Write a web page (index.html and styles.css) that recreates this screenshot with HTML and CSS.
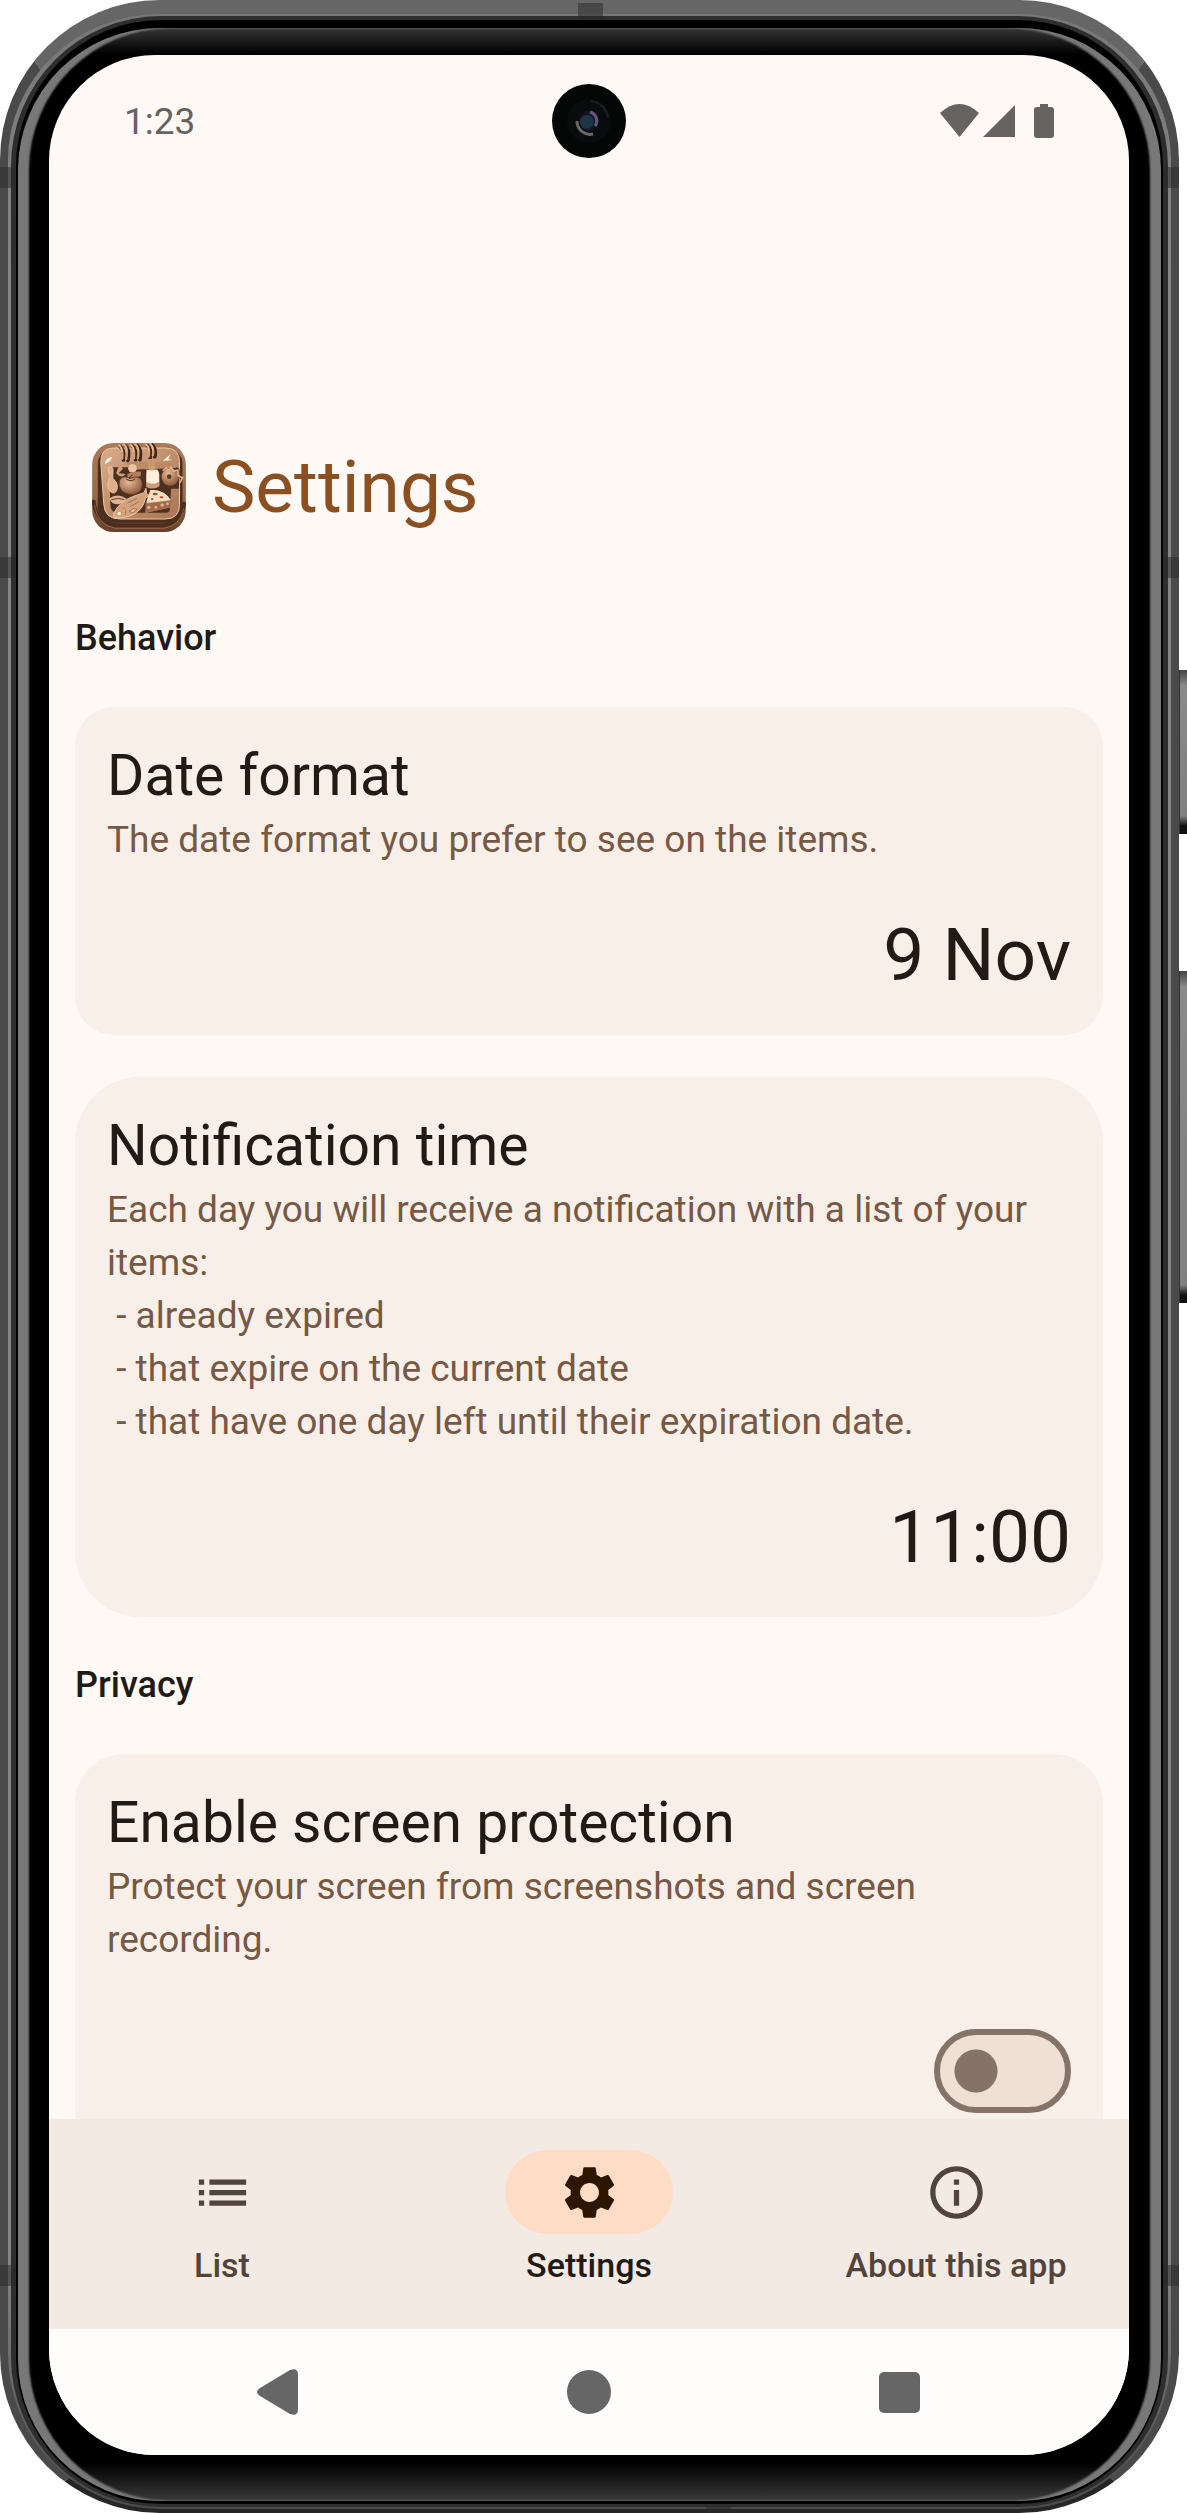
FILE: index.html
```html
<!DOCTYPE html>
<html lang="en">
<head>
  <meta charset="utf-8" />
  <meta name="viewport" content="width=device-width, initial-scale=1.0" />
  <title>Settings</title>
  <link rel="stylesheet" href="styles.css">
</head>
<body>
  <div class="device">
    <span class="side-key power"></span>
    <span class="side-key volume"></span>
    <div class="frame">
      <div class="rim">
        <div class="bezel">
          <div class="screen">

            <div class="status-bar">
              <span class="clock">1:23</span>
              <svg class="camera" viewBox="0 0 74 74" aria-hidden="true">
                <circle cx="37" cy="37" r="37" fill="#050606"/>
                <circle cx="37" cy="37" r="22" fill="#0a0b0d"/>
                <path d="M25 37a13 13 0 0 0 16 13" fill="none" stroke="#6a6866" stroke-width="3"/>
                <path d="M39 17a20 20 0 0 1 17 16" fill="none" stroke="#1d1f24" stroke-width="2"/>
                <circle cx="37" cy="37" r="10" fill="#14161f"/>
                <circle cx="35" cy="38" r="7" fill="#1c3547"/>
                <path d="M38 28a9 9 0 0 1 5 14" fill="none" stroke="#65587c" stroke-width="3"/>
              </svg>
              <svg class="status-icons" viewBox="0 0 114 34" aria-hidden="true">
                <path d="M0 9Q19.500-9 39 9L19.500 33Z"/>
                <path d="M43 33L75 1V33Z"/>
                <path d="M100 0h8v3h3a3 3 0 0 1 3 3v25a3 3 0 0 1-3 3H97a3 3 0 0 1-3-3V6a3 3 0 0 1 3-3h3z"/>
              </svg>
            </div>

            <main class="content">
              <header class="app-header">
                <svg class="app-icon" viewBox="97 69 281 267" aria-hidden="true">
                  <defs>
                    <linearGradient id="wood" x1="0" y1="0" x2="0" y2="1">
                      <stop offset="0" stop-color="#a97b5b"/>
                      <stop offset=".6" stop-color="#98694a"/>
                      <stop offset="1" stop-color="#65402a"/>
                    </linearGradient>
                    <linearGradient id="tray" x1="0" y1="0" x2="1" y2="1">
                      <stop offset="0" stop-color="#d9ab88"/>
                      <stop offset="1" stop-color="#a97552"/>
                    </linearGradient>
                    <radialGradient id="fruit" cx=".4" cy=".3" r=".7">
                      <stop offset="0" stop-color="#e8bc98"/>
                      <stop offset="1" stop-color="#8c5a3a"/>
                    </radialGradient>
                  </defs>
                  <rect x="97" y="69" width="281" height="267" rx="64" fill="url(#wood)"/>
                  <path d="M101 240q5 66 66 76h142q56-7 65-70" fill="none" stroke="#4b2d1c" stroke-width="11"/>
                  <path d="M104 255q8 60 62 70h146q50-8 60-60" fill="none" stroke="#a77753" stroke-width="2"/>
                  <rect x="114" y="84" width="254" height="224" rx="48" fill="#492f20"/>
                  <path d="M160 84h155q44 0 44 40v130q0 43-44 43H180q-45 0-48-43l-9-125q-2-45 37-45z" fill="url(#tray)" stroke="#efc7a5" stroke-width="3"/>
                  <path d="M147 142h200q14 0 13 14l-3 50h-23l-4 64q-2 8-12 8H172q-18 0-20-20z" fill="#4c3122"/>
                  <path d="M193 126h130q28-2 25 18l-130 5z" fill="#bd8a66"/>
                  <path d="M134 132q5-20 23-22-3 15-23 22zM309 122l23-19-7 15 14 2z" fill="#fff3e4"/>
                  <g fill="none" stroke-linecap="round">
                    <path d="M181 80q14 10 10 40M196 77q15 10 8 44M217 79q14 10 10 40M232 77q14 10 8 42M263 77q14 10 8 37M276 74q14 14 9 36" stroke="#3f2518" stroke-width="11"/>
                    <path d="M177 76q14 10 10 40M191 73q15 10 8 44M212 75q14 10 10 40M226 73q14 10 8 42M258 73q14 10 8 37M270 70q14 14 9 36" stroke="#cf9f7b" stroke-width="7"/>
                    <path d="M179 75q8 6 8 20M193 73q8 6 8 20M214 74q8 6 8 20M228 73q8 6 8 18M260 73q7 5 7 18M272 72q7 5 7 18" stroke="#fbe0c6" stroke-width="2"/>
                  </g>
                  <path d="M145 143q13-7 15 5l-1 27q15 12 14 27-2 19-15 17-14-6-14-26l5-23z" fill="#dcaf8c" stroke="#f5d2b2" stroke-width="2"/>
                  <path d="M174 145q10-13 15 2l-13 13 21 2q-12 16-28-2z" fill="#d2a17c"/>
                  <circle cx="218" cy="145" r="13" fill="#e9c4a4"/>
                  <path d="M202 163q16-10 42-8l-2 14-38 6z" fill="#b47f59"/>
                  <circle cx="275" cy="128" r="12" fill="#c9966f"/>
                  <path d="M266 138h21v12q12 5 12 15v34q-18 12-40 2v-38q1-9 8-13z" fill="#cf9c74"/>
                  <path d="M260 148q14 7 32 0 7 8 5 18v20q-18 10-37 0z" fill="#fff0de"/>
                  <path d="M179 181q7-15 27-8 9 5 17-2 22-3 24 18 2 32-31 35-32-1-38-28z" fill="url(#fruit)" stroke="#5a3824" stroke-width="2"/>
                  <path d="M207 178q5-12 11-12M199 177q15 11 27-1" fill="none" stroke="#4c2f20" stroke-width="3"/>
                  <circle cx="331" cy="171" r="26" fill="url(#fruit)"/>
                  <circle cx="328" cy="170" r="7" fill="#5d3924"/>
                  <path d="M308 152l12-8 4 8 10-10 7 12 13-4 1 17 13 6-8 16" fill="none" stroke="#dfb18d" stroke-width="5"/>
                  <path d="M148 236q24-19 52 0-20 26-43 12z" fill="#e0b28e"/>
                  <path d="M155 239q22-8 38 0" fill="none" stroke="#67422d" stroke-width="3"/>
                  <path d="M162 280q15-34 56-50l35-12 5-13 2 17 11 5-14 7q-5 31-34 48-31 16-61 10z" fill="#d3a17c" stroke="#f0c7a4" stroke-width="3"/>
                  <circle cx="178" cy="281" r="5" fill="#fff5e4"/>
                  <path d="M191 262q10 9 6 22M203 249l28-14M210 260l28-15M208 274l13-8 11 1-13 12z" fill="#e9be9a" stroke="#87583b" stroke-width="2"/>
                  <path d="M260 245l12-35q40-4 64 35l-2 17-77 16z" fill="#e0b28d"/>
                  <path d="M260 246l12-36q42-3 64 34z" fill="#fbdcbf"/>
                  <path d="M257 251l79-11-2 22-77 17z" fill="#a06c49"/>
                  <g fill="#8a5a3c">
                    <ellipse cx="286" cy="222" rx="8" ry="4"/>
                    <ellipse cx="305" cy="232" rx="6" ry="3"/>
                    <ellipse cx="277" cy="237" rx="4" ry="3"/>
                  </g>
                  <g fill="#e3b38b">
                    <circle cx="267" cy="262" r="5"/>
                    <circle cx="288" cy="262" r="4"/>
                    <circle cx="307" cy="255" r="5"/>
                    <circle cx="323" cy="251" r="4"/>
                  </g>
                </svg>
                <h1>Settings</h1>
              </header>

              <h2 class="section-title">Behavior</h2>
              <section class="card card-small">
                <h3>Date format</h3>
                <p>The date format you prefer to see on the items.</p>
                <button class="value" type="button">9 Nov</button>
              </section>
              <section class="card card-large">
                <h3>Notification time</h3>
                <p>Each day you will receive a notification with a list of your items:
 - already expired
 - that expire on the current date
 - that have one day left until their expiration date.</p>
                <button class="value" type="button">11:00</button>
              </section>

              <h2 class="section-title">Privacy</h2>
              <section class="card">
                <h3><label for="screen-protection">Enable screen protection</label></h3>
                <p>Protect your screen from screenshots and screen recording.</p>
                <input class="switch" type="checkbox" role="switch" id="screen-protection">
              </section>
            </main>

            <nav class="tabs">
              <a class="tab" href="#list">
                <span class="pill"><svg viewBox="0 0 24 24" aria-hidden="true"><path d="M3 9h2V7H3zm0 4h2v-2H3zm0 4h2v-2H3zM7 7v2h14V7zm0 6h14v-2H7zm0 4h14v-2H7z"/></svg></span>
                List
              </a>
              <a class="tab active" href="#settings">
                <span class="pill"><svg viewBox="0 0 24 24" aria-hidden="true"><path d="M19.140 12.940c.04-.3.060-.61.060-.94 0-.32-.02-.64-.07-.94l2.030-1.580c.18-.14.230-.41.120-.61l-1.920-3.320c-.12-.22-.37-.29-.59-.22l-2.390.96c-.5-.38-1.030-.7-1.620-.94l-.36-2.540c-.04-.24-.24-.41-.48-.41h-3.840c-.24 0-.43.170-.47.410l-.36 2.540c-.59.240-1.130.570-1.620.940l-2.390-.96c-.22-.08-.47 0-.59.220L2.740 8.870c-.12.210-.08.470.120.610l2.030 1.580c-.05.3-.09.630-.09.940s.02.640.070.940l-2.030 1.580c-.18.140-.23.410-.12.610l1.920 3.320c.12.220.370.290.590.220l2.390-.96c.5.380 1.030.7 1.620.940l.36 2.540c.05.240.240.410.480.410h3.840c.24 0 .44-.17.470-.41l.36-2.540c.59-.24 1.130-.56 1.620-.94l2.390.96c.22.080.470 0 .59-.22l1.920-3.320c.12-.22.070-.47-.12-.61zM12 15.600c-1.980 0-3.600-1.620-3.600-3.600s1.620-3.600 3.600-3.600 3.600 1.620 3.600 3.600-1.620 3.600-3.600 3.600z"/></svg></span>
                Settings
              </a>
              <a class="tab" href="#about">
                <span class="pill"><svg viewBox="0 0 24 24" aria-hidden="true"><path d="M11 7h2v2h-2zm0 4h2v6h-2zm1-9C6.480 2 2 6.480 2 12s4.480 10 10 10 10-4.480 10-10S17.520 2 12 2zm0 18c-4.410 0-8-3.590-8-8s3.590-8 8-8 8 3.590 8 8-3.590 8-8 8z"/></svg></span>
                About this app
              </a>
            </nav>

            <div class="system-bar">
              <button type="button" aria-label="Back"><svg viewBox="0 0 46 46"><path d="M4 19L34 1Q42-2 42 6V40Q42 48 34 45L4 27Q-2 23 4 19Z"/></svg></button>
              <button type="button" aria-label="Home"><svg viewBox="0 0 46 46"><circle cx="23" cy="23" r="22"/></svg></button>
              <button type="button" aria-label="Recent apps"><svg viewBox="0 0 46 46"><rect x="3" y="3" width="41" height="41" rx="5"/></svg></button>
            </div>

          </div>
        </div>
      </div>
      <span class="band band-left band-high"></span>
      <span class="band band-left band-middle"></span>
      <span class="band band-left band-low"></span>
      <span class="band band-right band-high"></span>
      <span class="band band-right band-middle"></span>
      <span class="band band-right band-low"></span>
      <span class="band band-top"></span>
      <span class="band band-bottom"></span>
    </div>
  </div>
</body>
</html>
```

FILE: styles.css
```css
* {
  box-sizing: border-box;
}

body {
  margin: 0;
  background: #fff;
  font-family: Roboto, sans-serif;
  color: #221a15;
}

h1, h2, h3, p {
  margin: 0;
  font-weight: 400;
}

button {
  border: 0;
  padding: 0;
  background: none;
  font-family: inherit;
  color: inherit;
}

/* phone body */
.device {
  position: relative;
  height: 100vh;
  padding-right: 8px;
}

.side-key {
  position: absolute;
  right: 0;
  width: 9px;
  background: linear-gradient(#444, #8a8a8a 16px, #808080 calc(100% - 18px), #111 calc(100% - 8px));
  border-left: 2px solid #333;
}

.power {
  top: 670px;
  height: 164px;
}

.volume {
  top: 971px;
  height: 332px;
}

.frame {
  position: relative;
  height: 100%;
  padding: 2px 3px;
  border-style: solid;
  border-width: 14px 8px 4px;
  border-color: #666 #4a4a4a #262626;
  border-radius: 160px;
  background: linear-gradient(#777, #858585 10%, #858585 90%, #4a4a4a);
}

.rim {
  height: 100%;
  padding: 8px 2px 3px;
  border-style: solid;
  border-width: 4px 5px 3px;
  border-color: #2e2e2e;
  border-radius: 150px;
  background: #000;
}

.bezel {
  height: 100%;
  padding: 27px 32px 46px 31px;
  border-radius: 142px;
  background: linear-gradient(#363636, #000 26px, #000 calc(100% - 38px), #3a3a3a);
  box-shadow: inset 11px 0 2px #787878, inset -11px 0 2px #787878;
}

.band {
  position: absolute;
  width: 16px;
  height: 21px;
  background: rgba(40, 40, 40, 0.5);
}

.band-left {
  left: -8px;
}

.band-right {
  right: -8px;
}

.band-high {
  top: 153px;
}

.band-middle {
  top: 543px;
}

.band-low {
  bottom: 223px;
}

.band-top {
  top: -11px;
  left: 49%;
  width: 25px;
  height: 16px;
}

.band-bottom {
  bottom: -4px;
  left: 60%;
  width: 25px;
  height: 7px;
}

/* screen */
.screen {
  display: flex;
  flex-direction: column;
  height: 100%;
  overflow: hidden;
  border-radius: 106px;
  background: #fff9f5;
}

.status-bar {
  display: grid;
  grid-template-columns: 1fr 74px 1fr;
  align-items: center;
  height: 132px;
  padding: 0 75px;
  color: #666361;
}

.clock {
  font-size: 37px;
}

.camera {
  width: 74px;
  height: 74px;
}

.status-icons {
  justify-self: end;
  width: 114px;
  height: 34px;
  fill: #666361;
}

.content {
  flex: 1;
  min-height: 0;
  display: flex;
  flex-direction: column;
  gap: 42px;
  overflow: hidden;
  padding: 253px 26px 0;
}

.app-header {
  display: flex;
  align-items: center;
  gap: 26px;
  padding: 0 17px;
  margin-bottom: 35px;
}

.app-icon {
  width: 94px;
  height: 89px;
}

.app-header h1 {
  font-size: 73px;
  line-height: 95px;
  color: #8b5022;
}

.section-title {
  font-size: 36px;
  line-height: 53px;
  font-weight: 500;
}

.card {
  flex-shrink: 0;
  display: flex;
  flex-direction: column;
  padding: 32px;
  border-radius: 49px;
  background: #f8efe9;
}

.card-small {
  border-radius: 39px;
}

.card-large {
  border-radius: 65px;
}

.card h3 {
  font-size: 57px;
  line-height: 74px;
}

.card p {
  margin-bottom: 42px;
  font-size: 37px;
  line-height: 53px;
  color: #755945;
  white-space: pre-wrap;
}

.value {
  align-self: flex-end;
  font-size: 73px;
  line-height: 95px;
}

.switch {
  appearance: none;
  align-self: flex-end;
  width: 137px;
  height: 84px;
  margin: 21px 0;
  border: 6px solid #85736a;
  border-radius: 42px;
  background: radial-gradient(circle at 36px center, #85736a 21px, #f0dfd5 22px);
}

/* bottom navigation */
.tabs {
  display: flex;
  gap: 21px;
  height: 210px;
  padding-top: 31px;
  background: #f3eae4;
}

.tab {
  flex: 1;
  display: flex;
  flex-direction: column;
  align-items: center;
  gap: 10px;
  font-size: 34px;
  line-height: 42px;
  font-weight: 500;
  color: #52443b;
  text-decoration: none;
}

.pill {
  display: flex;
  align-items: center;
  justify-content: center;
  width: 168px;
  height: 84px;
  border-radius: 42px;
}

.pill svg {
  width: 63px;
  height: 63px;
  fill: #52443b;
}

.active {
  color: #221a15;
}

.active .pill {
  background: #ffdcc5;
}

.active svg {
  fill: #2d1600;
}

.system-bar {
  display: flex;
  align-items: center;
  justify-content: center;
  gap: 264px;
  height: 126px;
  background: #fffdfb;
}

.system-bar svg {
  display: block;
  width: 46px;
  height: 46px;
  fill: #666;
}
```
